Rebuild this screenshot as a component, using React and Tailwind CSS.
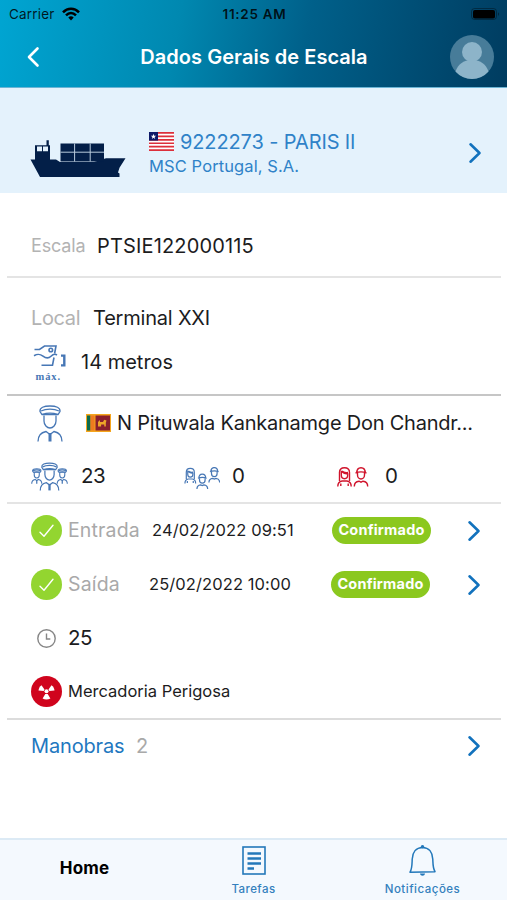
import React from "react";

function Chevron({ left = false, className = "" }) {
  return (
    <svg width="14" height="22" viewBox="0 0 14 22" fill="none" stroke="currentColor" strokeWidth="2.6" strokeLinecap="round" strokeLinejoin="round" className={className}>
      <path d={left ? "M11.500 2.500 3 11l8.500 8.500" : "M2.500 2.300 11.500 11l-9 8.700"} />
    </svg>
  );
}

function StatusBar() {
  return (
    <div className="grid h-7 grid-cols-3 items-center pl-[9px] pr-[7px] text-[13.500px] text-black/85">
      <div className="flex items-center gap-[7px]">
        <span className="tracking-[0.200px]">Carrier</span>
        <svg width="18" height="14" viewBox="0 0 18 14" fill="none" stroke="#000" strokeWidth="2.500">
          <path d="M1 5.300C5.500.6 12.500.6 17 5.300" />
          <path d="M4 8.300c3-3 7-3 10 0" />
          <path d="M6.300 10.400c1.600-1.500 3.800-1.500 5.400 0L9 13.400z" fill="#000" stroke="none" />
        </svg>
      </div>
      <span className="whitespace-nowrap text-center text-[13.500px] font-semibold tracking-[0.700px]">11:25 AM</span>
      <svg width="30" height="14" viewBox="0 0 30 14" className="justify-self-end">
        <rect x="1.500" y="1.500" width="25" height="11" rx="3" fill="none" stroke="#000" strokeOpacity=".35" />
        <rect x="3" y="3" width="22" height="8.500" rx="1.800" fill="#000" />
        <path d="M28 5.200c1.400.4 1.400 3.200 0 3.600z" fill="#000" fillOpacity=".4" />
      </svg>
    </div>
  );
}

function Avatar() {
  return (
    <svg width="44" height="44" viewBox="0 0 44 44">
      <circle cx="22" cy="22" r="22" fill="#477c99" />
      <circle cx="22" cy="17" r="10" fill="#8db4c9" />
      <path d="M5.500 36.500C8 29.500 13 25 22 25s14 4.500 16.500 11.500A22 22 0 0 1 5.500 36.500z" fill="#8db4c9" />
    </svg>
  );
}

function Ship() {
  return (
    <svg width="96" height="40" viewBox="0 0 96 40" fill="#031f48">
      <path d="M.5 20.500H5V6.200h11.500V1.200h2.300v5h1.200v14.300h6L30 23h34l12-3.700h19.500l-6 9.500-1.500 4.700 1.500 1v3.500H10L3.500 26z" />
      <path d="M7 7.500h5v4.800H7zM13 7.500h5v4.800h-5z" fill="#e4f2fc" />
      <path d="M30.500 4.500H74V22.500H30.500z" />
      <path d="M30.500 13.200H74M44.600 4.500v18M60.200 4.500v18" stroke="#b9cbdc" strokeWidth="1" />
    </svg>
  );
}

function LiberiaFlag() {
  return (
    <svg width="25" height="19" viewBox="0 0 25 19">
      <rect width="25" height="19" fill="#fff" />
      <path d="M0 .9h25M0 4.350h25M0 7.800h25M0 11.250h25M0 14.700h25M0 18.150h25" stroke="#dc2f3b" strokeWidth="1.730" />
      <rect width="9" height="8.600" fill="#0e1a68" />
      <path d="m4.500 1.700.7 2h2L5.600 5l.6 2-1.700-1.200L2.800 7l.6-2-1.600-1.300h2z" fill="#fff" />
    </svg>
  );
}

function SriLankaFlag() {
  return (
    <svg width="25" height="18" viewBox="0 0 25 18">
      <rect width="25" height="18" fill="#f5a51d" />
      <rect x="1" y="1.500" width="3.500" height="15" fill="#0c6b4d" />
      <rect x="4.500" y="1.500" width="4" height="15" fill="#ee7b20" />
      <rect x="9.500" y="1.500" width="14.500" height="15" fill="#8b1f2d" />
      <path d="M12 12.500V8l2-2v2h3l1.200-2.200 2.300.8-.7 2.200v3.700h-1.500v-2h-3.200v2z" fill="#eea529" />
    </svg>
  );
}

function Draft() {
  return (
    <svg width="35" height="40" viewBox="0 0 35 40" fill="none" stroke="#4777b5" strokeWidth="1.600">
      <path d="M1.500 5.500h5L11.500 2H23l-1.400 7.500" />
      <circle cx="17.800" cy="6" r="1.800" />
      <path d="M1 11.700c4-2.200 6-1.800 9 .5s5.500 2.500 8 0c2.200-2.200 3.800-2.700 6-1.200" />
      <path d="M21 13.500 19.500 21.200H8.500" />
      <path d="M28 11.600h3.300v9.800H28" strokeWidth="2.400" />
      <text x="2.500" y="36" fontFamily="Liberation Serif, serif" fontWeight="bold" fontSize="10.500" textLength="24.500" fill="#4777b5" stroke="none">máx.</text>
    </svg>
  );
}

function OfficerShape() {
  return (
    <g>
      <path d="M3 6.500C2.500 2.500 7 1 13 1s10.500 1.500 10 5.500l-2 3H5z" />
      <path d="M4 6c5-2.500 13-2.500 18 0M5 9.500c5-1.800 11-1.800 16 0" />
      <path d="M7 10.500V16c0 4 3 7 6 7s6-3 6-7v-5.500" />
      <path d="M1 36.500c0-6.500 3-9 8-10l4 3 4-3c5 1 8 3.500 8 10" />
      <path d="M13 28v8.500" strokeWidth="3" />
    </g>
  );
}

function Captain() {
  return (
    <svg width="26" height="37" viewBox="0 0 26 37" fill="none" stroke="#4777b5" strokeWidth="1.300">
      <OfficerShape />
    </svg>
  );
}

function Crew() {
  return (
    <svg width="37" height="29" viewBox="0 0 37 29" fill="none" stroke="#4777b5">
      <g transform="translate(8.500 .3) scale(.77)" strokeWidth="1.600"><OfficerShape /></g>
      <g transform="translate(.3 6.300) scale(.42)" strokeWidth="2.600"><OfficerShape /></g>
      <g transform="translate(25.800 6.300) scale(.42)" strokeWidth="2.600"><OfficerShape /></g>
    </svg>
  );
}

function WomanShape() {
  return (
    <g>
      <path d="M2.500 14V5.500C2.500 2.500 4.500.7 7.500.7s5 1.800 5 4.800V14" />
      <path d="M4.300 4.500V8c0 2.200 1.400 3.700 3.200 3.700s3.200-1.500 3.200-3.700V7C8 7 6 6 4.300 4.500zM5 4c1 1.200 3.500 1.800 6 1.500" />
      <path d="M.8 19.500c0-3.500 1.200-5 4.200-5.500h5c3 .5 4.200 2 4.200 5.500M3.800 19v-2.500M11.200 19v-2.500" />
    </g>
  );
}

function ManShape() {
  return (
    <g>
      <path d="M3.200 6C3.200 2.500 5 .7 7.500.7S11.800 2.500 11.800 6M2 6c3-1.200 8-1.200 11 0" />
      <path d="M4 6v2c0 2.200 1.500 4 3.500 4S11 10.200 11 8V6" />
      <path d="M.8 19.500c0-3.500 1.500-5 4.700-5.300l2 1 2-1c3.200.3 4.700 1.800 4.700 5.300" />
    </g>
  );
}

function Passengers() {
  return (
    <svg width="36" height="23" viewBox="0 0 36 23" fill="none" stroke="#4777b5" strokeWidth="1.500">
      <g transform="translate(.3 .8) scale(.8)"><WomanShape /></g>
      <g transform="translate(12.300 6.500) scale(.8)"><ManShape /></g>
      <g transform="translate(24.300 0) scale(.8)"><ManShape /></g>
    </svg>
  );
}

function Stowaways() {
  return (
    <svg width="32" height="20" viewBox="0 0 32 20" fill="none" stroke="#d0142c" strokeWidth="1.400">
      <WomanShape />
      <g transform="translate(16.500 0)"><ManShape /></g>
    </svg>
  );
}

function Check() {
  return (
    <svg width="31" height="31" viewBox="0 0 31 31">
      <circle cx="15.500" cy="15.500" r="15.500" fill="#93d530" />
      <path d="m9 17.200 4 4 9-11" fill="none" stroke="#fff" strokeWidth="1.400" strokeLinecap="round" strokeLinejoin="round" />
    </svg>
  );
}

function Clock() {
  return (
    <svg width="19" height="19" viewBox="0 0 19 19" fill="none" stroke="#868686" strokeWidth="1.400">
      <circle cx="9.500" cy="9.500" r="8.700" />
      <path d="M9.500 4.500v5.500h3.800" />
    </svg>
  );
}

function Hazard() {
  return (
    <svg width="31" height="31" viewBox="0 0 31 31">
      <circle cx="15.500" cy="15.500" r="15.500" fill="#d0041d" />
      <g fill="#fff">
        <circle cx="15.500" cy="15.300" r="2" />
        <path d="M7.500 14.500c.2-2.200 1.300-4 3-5.200l3 4.200-.8 1.500z" />
        <path d="M23.500 14.500c-.2-2.200-1.300-4-3-5.200l-3 4.200.8 1.500z" />
        <path d="M11.600 22.500 14.300 18h2.400l2.700 4.500c-2.400 1.300-5.400 1.300-7.800 0z" />
      </g>
    </svg>
  );
}

function CallRow({ label, date, dateClass, badgeClass }) {
  return (
    <div className="flex h-[54px] items-center pb-[1px] pl-[31px]">
      <Check />
      <span className="ml-[6px] w-[80px] text-[19.500px] tracking-[0.150px] text-[#a9a9a9]">{label}</span>
      <span className={"w-[150px] text-[16.500px] tracking-[0.100px] " + dateClass}>{date}</span>
      <span className={"flex h-[27px] w-[99px] items-center justify-center rounded-full bg-[#8bc81f] pb-px text-[14.500px] font-bold tracking-[0.200px] text-white " + badgeClass}>Confirmado</span>
      <Chevron className="ml-auto mr-[26px] text-[#1272bd]" />
    </div>
  );
}

function Divider({ className }) {
  return <div className={"ml-[7px] mr-[6px] h-[2px] shrink-0 " + className} />;
}

export default function App() {
  return (
    <div className="flex h-[900px] w-[507px] flex-col overflow-hidden whitespace-nowrap bg-white font-['Inter','Liberation_Sans',sans-serif] text-[#1c1c1e]">
      <header className="h-[88px] shrink-0 border-b border-[#6cb5d5] bg-linear-[100deg,#00a5d2_0%,#0088b0_35%,#00608a_60%,#003c60_100%]">
        <StatusBar />
        <div className="flex h-[58px] items-center justify-between pl-[26px] pr-[13px] text-white">
          <Chevron left />
          <h1 className="ml-[18px] text-[20px] font-semibold tracking-[0.040px]">Dados Gerais de Escala</h1>
          <Avatar />
        </div>
      </header>

      <section className="flex h-[105px] shrink-0 items-start bg-[#e4f2fc] pl-[30px] text-[#2f82c8]">
        <div className="mt-[51px]"><Ship /></div>
        <div className="ml-[23px] mt-[40px]">
          <div className="flex h-[27px] items-center gap-[6px]">
            <LiberiaFlag />
            <span className="text-[20px] tracking-[-0.120px]">9222273 - PARIS II</span>
          </div>
          <p className="text-[16.500px] leading-[22px] tracking-[0.100px]">MSC Portugal, S.A.</p>
        </div>
        <Chevron className="ml-auto mr-[25px] mt-[54px] text-[#1272bd]" />
      </section>

      <section className="flex h-[83px] shrink-0 items-center pl-[31px] pt-[22px]">
        <span className="w-[66px] text-[18px] tracking-[-0.150px] text-[#b3b3b3]">Escala</span>
        <span className="text-[20px] tracking-[0.150px]">PTSIE122000115</span>
      </section>
      <Divider className="bg-[#e4e4e4]" />

      <section className="h-[116px] shrink-0 pl-[31px] pt-[18px]">
        <div className="flex h-[44px] items-center">
          <span className="w-[62px] text-[20px] tracking-[-0.350px] text-[#b3b3b3]">Local</span>
          <span className="text-[20px] tracking-[-0.200px]">Terminal XXI</span>
        </div>
        <div className="flex h-[44px] items-center">
          <div className="mt-[4px] w-[50px] pl-[2px]"><Draft /></div>
          <span className="text-[20px]">14 metros</span>
        </div>
      </section>
      <Divider className="bg-[#c6c6c6]" />

      <section className="h-[106px] shrink-0">
        <div className="flex h-[54px] items-center pl-[37px]">
          <Captain />
          <div className="ml-[23px]"><SriLankaFlag /></div>
          <span className="ml-[6px] text-[20px] tracking-[-0.230px]">N Pituwala Kankanamge Don Chandr...</span>
        </div>
        <div className="flex h-[52px] items-center pl-[31px] text-[20.500px] tracking-[-0.400px]">
          <div className="w-[50px]"><Crew /></div>
          <span className="w-[103px]">23</span>
          <div className="w-[48px] pt-[4px]"><Passengers /></div>
          <span className="w-[105px]">0</span>
          <div className="w-[48px] pt-[1px]"><Stowaways /></div>
          <span>0</span>
        </div>
      </section>
      <Divider className="bg-[#e4e4e4]" />

      <section className="h-[214px] shrink-0">
        <CallRow label="Entrada" date="24/02/2022 09:51" dateClass="ml-[4px]" badgeClass="ml-[30px]" />
        <CallRow label="Saída" date="25/02/2022 10:00" dateClass="ml-[1px]" badgeClass="ml-[32px]" />
        <div className="flex h-[54px] items-center pb-[2px] pl-[37px]">
          <Clock />
          <span className="ml-[12px] text-[20.500px] tracking-[-0.400px]">25</span>
        </div>
        <div className="flex h-[52px] items-center pb-[1px] pl-[31px]">
          <Hazard />
          <span className="ml-[6px] text-[16.500px]">Mercadoria Perigosa</span>
        </div>
      </section>
      <Divider className="bg-[#dcdcdc]" />

      <section className="flex h-[52px] shrink-0 items-center pl-[31px] text-[20px]">
        <span className="w-[105px] tracking-[-0.150px] text-[#1f78bf]">Manobras</span>
        <span className="text-[#a9a9a9]">2</span>
        <Chevron className="ml-auto mr-[26px] text-[#1272bd]" />
      </section>

      <nav className="mt-auto grid h-[62px] shrink-0 grid-cols-3 border-t-2 border-[#dceaf5] bg-[#f4f9fe] text-[#3380bd]">
        <span className="flex items-center justify-center pb-[2px] text-[17px] font-bold tracking-[0.150px] text-black">Home</span>
        <div className="flex flex-col items-center pt-[6px]">
          <svg width="24" height="29" viewBox="0 0 24 29" fill="none" stroke="#2378ba">
            <rect x="1" y="1" width="22" height="27" strokeWidth="1.600" />
            <path d="M5.500 7.500h13.500M5.500 12.500h13.500M5.500 17.500h13.500M5.500 22.500h6.500" strokeWidth="2.700" />
          </svg>
          <span className="mt-[6px] text-[11.500px] font-medium leading-[16px] tracking-[0.450px]">Tarefas</span>
        </div>
        <div className="flex flex-col items-center pt-[5px]">
          <svg width="27" height="32" viewBox="0 0 27 32" fill="none" stroke="#2378ba" strokeWidth="1.500" strokeLinejoin="round">
            <path d="M1 27.200c2.200-3.500 2-8 2.200-13C3.500 7.500 7 2.500 13.500 2.500S23.500 7.500 23.800 14.200c.2 5 0 9 2.200 12.500z" />
            <circle cx="13.500" cy="1.800" r="1" fill="#2378ba" />
            <path d="M11 28.500h5c-.3 3-4.700 3-5 0z" fill="#2378ba" stroke="none" />
          </svg>
          <span className="mt-[4px] text-[11.500px] font-medium leading-[16px] tracking-[0.500px]">Notificações</span>
        </div>
      </nav>
    </div>
  );
}
